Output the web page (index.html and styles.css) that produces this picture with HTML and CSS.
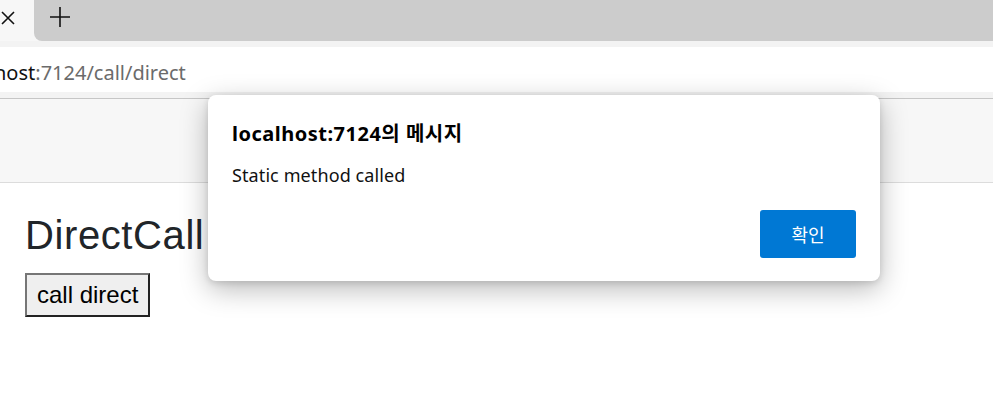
FILE: index.html
```html
<!DOCTYPE html>
<html lang="ko">
<head>
<meta charset="utf-8">
<title>DirectCall</title>
<link rel="stylesheet" href="styles.css">
</head>
<body>
<div class="browser">
  <div class="tabstrip">
    <div class="tab-active">
      <svg class="tab-close" width="16" height="16" viewBox="0 0 16 16"><path d="M2 2 L14 14 M14 2 L2 14" stroke="#111" stroke-width="1.6" fill="none"/></svg>
    </div>
    <div class="tab-rest">
      <svg class="tab-new" width="22" height="22" viewBox="0 0 22 22"><path d="M11 1 V21 M1 11 H21" stroke="#111" stroke-width="1.6" fill="none"/></svg>
    </div>
  </div>
  <div class="toolbar">
    <div class="address"><span class="host">host</span><span class="path">:7124/call/direct</span></div>
  </div>
  <div class="page">
    <div class="navbar"></div>
    <main class="content">
      <h1 class="title">DirectCall</h1>
      <button class="call-btn">call direct</button>
    </main>
  </div>
</div>
<div class="dialog">
  <div class="dialog-title">localhost:7124의 메시지</div>
  <div class="dialog-msg">Static method called</div>
  <div class="dialog-actions"><button class="ok-btn">확인</button></div>
</div>
</body>
</html>
```
FILE: styles.css
```css
html, body {
  margin: 0;
  padding: 0;
}
body {
  width: 993px;
  height: 403px;
  overflow: hidden;
  background: #ffffff;
  position: relative;
  font-family: "Noto Sans", "Noto Sans CJK KR", sans-serif;
}
.browser {
  display: flex;
  flex-direction: column;
}
.tabstrip {
  height: 41px;
  display: flex;
  background: #f7f7f7;
}
.tab-active {
  width: 34px;
  background: #f7f7f7;
  position: relative;
}
.tab-close {
  position: absolute;
  left: 0;
  top: 10px;
}
.tab-rest {
  flex: 1;
  background: #cccccc;
  border-bottom-left-radius: 8px;
  position: relative;
}
.tab-new {
  position: absolute;
  left: 15px;
  top: 6px;
}
.toolbar {
  background: #f3f3f3;
  padding: 6px 0 6px 0;
  border-bottom: 1px solid #c6c6c6;
}
.address {
  height: 45px;
  background: #ffffff;
  display: flex;
  align-items: center;
  font-size: 20px;
  padding-top: 5px;
  box-sizing: border-box;
  margin-left: -6px;
}
.host { color: #111; }
.path { color: #6b6b6b; }
.page {
  display: flex;
  flex-direction: column;
}
.navbar {
  height: 83px;
  background: #f7f7f7;
  border-bottom: 1px solid #dcdcdc;
}
.content {
  padding: 0 25px;
}
.title {
  margin: 28px 0 0 0;
  font-family: "Liberation Sans", Arial, sans-serif;
  font-weight: 400;
  font-size: 40px;
  letter-spacing: 0.6px;
  line-height: 48px;
  color: #212529;
}
.call-btn {
  margin-top: 14px;
  font-family: "Liberation Sans", Arial, sans-serif;
  font-size: 24px;
  height: 44px;
  padding: 0 10px;
  background: #efefef;
  color: #000;
  border: 2px solid;
  border-color: #767676 #222222 #222222 #767676;
}
.dialog {
  position: absolute;
  left: 208px;
  top: 95px;
  width: 672px;
  height: 186px;
  box-sizing: border-box;
  padding: 25px 24px 23px 24px;
  background: #ffffff;
  border-radius: 8px;
  box-shadow: 0 8px 28px rgba(0, 0, 0, 0.28), 0 2px 6px rgba(0,0,0,0.12);
  display: flex;
  flex-direction: column;
}
.dialog-title {
  font-weight: 700;
  font-size: 20px;
  letter-spacing: 0.5px;
  line-height: 28px;
  color: #000;
}
.dialog-msg {
  margin-top: 15px;
  font-size: 18px;
  letter-spacing: 0.1px;
  line-height: 24px;
  color: #111;
}
.dialog-actions {
  margin-top: auto;
  display: flex;
  justify-content: flex-end;
}
.ok-btn {
  width: 96px;
  height: 48px;
  background: #0078d4;
  color: #fff;
  border: none;
  border-radius: 3px;
  font-family: "Noto Sans CJK KR", sans-serif;
  font-size: 18px;
}
```
